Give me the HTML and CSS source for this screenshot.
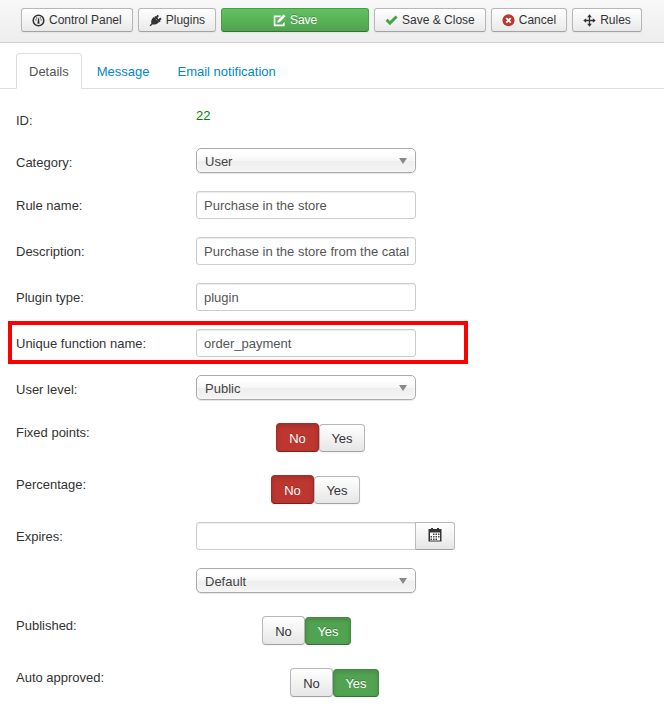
FILE: index.html
```html
<!DOCTYPE html>
<html lang="en">
<head>
<meta charset="utf-8">
<title>Rule details</title>
<link rel="stylesheet" href="styles.css">
</head>
<body>
<header class="toolbar">
  <button type="button" class="btn"><svg class="icon" viewBox="0 0 14 14"><circle cx="7" cy="7" r="5.700" fill="none" stroke="currentColor" stroke-width="1.700"/><path d="M6.300 6 7 3.600 7.700 6 8.200 10.500H5.800z" fill="currentColor"/><circle cx="4.200" cy="6.400" r=".7"/><circle cx="5.100" cy="4.300" r=".7"/><circle cx="8.900" cy="4.300" r=".7"/><circle cx="9.800" cy="6.400" r=".7"/></svg>Control Panel</button>
  <button type="button" class="btn"><svg class="icon" viewBox="0 0 14 14"><path d="M5.200 3.200 10.700 8.900C8.800 11 6 11.900 3.700 11.200L1.700 13.200.6 12.300l1.900-2.200C1.900 7.600 3 4.700 5.200 3.200z"/><path d="M7 5 10 1.500M9.500 7.800 12.900 4.600" stroke="currentColor" stroke-width="2"/><path d="m5.600 3.300 1.500-1.200 5.400 5.600-1.500 1.200z"/></svg>Plugins</button>
  <button type="button" class="btn btn-save"><svg class="icon" viewBox="0 0 14 14"><path d="M9 1.600H.8v11.600h11.700V8.500L10.600 10.200v1.200H2.600V3.400h4.900z"/><path d="m11.500.4 2.100 2.100-6.200 6.200-3 .9.900-3z"/></svg>Save</button>
  <button type="button" class="btn"><svg class="icon icon-ok" viewBox="0 0 14 14"><path d="M.5 7.300 2.800 5l2.500 2.500L11.400 1.600 13.600 3.800 5.300 12z"/></svg>Save &amp; Close</button>
  <button type="button" class="btn"><svg class="icon icon-cancel" viewBox="0 0 14 14"><circle cx="7" cy="6.800" r="6.500"/><path d="m4.600 4.400 4.800 4.800M9.400 4.400 4.600 9.200" stroke="#fff" stroke-width="1.900"/></svg>Cancel</button>
  <button type="button" class="btn"><svg class="icon" viewBox="0 0 14 14"><path d="M7 2v10M2 7h10" stroke="currentColor" stroke-width="1.400"/><path d="m7 .3 2.500 3.100h-5zM7 13.700l2.500-3.100h-5zM.3 7l3.100-2.500v5zM13.700 7l-3.100-2.500v5z"/></svg>Rules</button>
</header>

<nav class="tabs">
  <a href="#details" class="tab tab-active">Details</a>
  <a href="#message" class="tab">Message</a>
  <a href="#email" class="tab">Email notification</a>
</nav>

<form class="form" id="details">
  <div class="row"><span class="label">ID:</span><output class="record-id">22</output></div>
  <div class="row"><label class="label" for="category">Category:</label><div class="select"><select id="category"><option>User</option></select></div></div>
  <div class="row"><label class="label" for="rule">Rule name:</label><input class="text" id="rule" type="text" value="Purchase in the store"></div>
  <div class="row"><label class="label" for="description">Description:</label><input class="text" id="description" type="text" value="Purchase in the store from the catalog"></div>
  <div class="row"><label class="label" for="plugin">Plugin type:</label><input class="text" id="plugin" type="text" value="plugin"></div>
  <div class="row row-marked"><label class="label" for="function">Unique function name:</label><input class="text" id="function" type="text" value="order_payment"></div>
  <div class="row"><label class="label" for="level">User level:</label><div class="select"><select id="level"><option>Public</option></select></div></div>
  <div class="row"><span class="label" id="fixed">Fixed points:</span><div class="toggle toggle-fixed" role="group" aria-labelledby="fixed"><button type="button" class="choice choice-no" aria-pressed="true">No</button><button type="button" class="choice" aria-pressed="false">Yes</button></div></div>
  <div class="row"><span class="label" id="percentage">Percentage:</span><div class="toggle toggle-percentage" role="group" aria-labelledby="percentage"><button type="button" class="choice choice-no" aria-pressed="true">No</button><button type="button" class="choice" aria-pressed="false">Yes</button></div></div>
  <div class="row"><label class="label" for="expires">Expires:</label>
    <div class="stack">
      <div class="date"><input class="text" id="expires" type="text"><button type="button" class="date-button" aria-label="Choose a date"><svg class="calendar" viewBox="0 0 14 14"><path d="M.5 1h13v12.500H.5z" fill="#333"/><path d="M2 4.500h10v8H2z" fill="#fff"/><path d="M3 0h2v2H3zM9 0h2v2H9z" fill="#333"/><path d="M5 5.500h1.500V7H5zM7.500 5.500H9V7H7.500zM10 5.500h1.500V7H10zM2.500 8H4v1.500H2.500zM5 8h1.500v1.500H5zM7.500 8H9v1.500H7.500zM10 8h1.500v1.500H10zM2.500 10.500H4V12H2.500zM5 10.500h1.500V12H5zM7.500 10.500H9V12H7.500z" fill="#444"/></svg></button></div>
      <div class="select"><select aria-label="Expiry method"><option>Default</option></select></div>
    </div>
  </div>
  <div class="row"><span class="label" id="published">Published:</span><div class="toggle toggle-published" role="group" aria-labelledby="published"><button type="button" class="choice" aria-pressed="false">No</button><button type="button" class="choice choice-yes" aria-pressed="true">Yes</button></div></div>
  <div class="row"><span class="label" id="approved">Auto approved:</span><div class="toggle toggle-approved" role="group" aria-labelledby="approved"><button type="button" class="choice" aria-pressed="false">No</button><button type="button" class="choice choice-yes" aria-pressed="true">Yes</button></div></div>
</form>
</body>
</html>
```
FILE: styles.css
```css
*,
*::after {
  box-sizing: border-box;
}

body {
  margin: 0;
  background: #fff;
  color: #333;
  font: 13px/18px "Helvetica Neue", "Liberation Sans", Arial, sans-serif;
}

button,
input,
select {
  margin: 0;
  color: inherit;
  font: inherit;
}

.toolbar {
  display: flex;
  gap: 5px;
  padding: 8px 20px 10px 21px;
  border-bottom: 1px solid #d0d0d0;
  background: linear-gradient(#f8f8f8, #ededed);
}

.btn {
  display: flex;
  align-items: center;
  justify-content: center;
  gap: 4px;
  height: 24px;
  padding: 0 10px;
  border: 1px solid #b7b7b7;
  border-bottom-color: #a2a2a2;
  border-radius: 3px;
  background: linear-gradient(#fff, #e9e9e9);
  box-shadow: 0 1px 2px rgba(0, 0, 0, 0.05);
  font-size: 12px;
  white-space: nowrap;
}

.btn-save {
  width: 148px;
  border-color: #4a9a4a;
  border-bottom-color: #387038;
  background: linear-gradient(#61c261, #50a450);
  color: #fff;
  text-shadow: 0 -1px 0 rgba(0, 0, 0, 0.25);
}

.icon {
  width: 13px;
  height: 13px;
  fill: currentColor;
}

.icon-ok {
  fill: #46a546;
}

.icon-cancel {
  fill: #bd362f;
}

.tabs {
  display: flex;
  gap: 2px;
  margin-top: 10px;
  padding-left: 16px;
  border-bottom: 1px solid #ddd;
}

.tab {
  margin-bottom: -1px;
  padding: 9px 12px 7px;
  border: 1px solid transparent;
  border-radius: 4px 4px 0 0;
  color: #08c;
  text-decoration: none;
}

.tab-active {
  border-color: #ddd;
  border-bottom-color: #fff;
  background: #fff;
  color: #555;
}

.form {
  display: flex;
  flex-direction: column;
  gap: 18px;
  padding: 17px 16px 9px;
}

.row {
  display: flex;
  align-items: flex-start;
}

.row-marked {
  position: relative;
}

.row-marked::after {
  content: "";
  position: absolute;
  top: -8px;
  left: -8px;
  width: 460px;
  height: 43px;
  border: 4px solid #f00;
  pointer-events: none;
}

.label {
  flex: none;
  width: 180px;
  padding-top: 6px;
}

.record-id {
  color: #008000;
  line-height: 20px;
}

.text {
  width: 220px;
  height: 28px;
  padding: 4px 6px 4px 7px;
  border: 1px solid #ccc;
  border-radius: 3px;
  background: #fff;
  box-shadow: inset 0 1px 1px rgba(0, 0, 0, 0.075);
  color: #555;
}

.select {
  position: relative;
  width: 220px;
}

.select::after {
  content: "";
  position: absolute;
  top: 10px;
  right: 9px;
  border: 4px solid transparent;
  border-top: 6px solid #888;
  border-bottom: 0;
  pointer-events: none;
}

.select select {
  display: block;
  width: 100%;
  height: 25px;
  padding: 2px 8px 0;
  border: 1px solid #aaa;
  border-radius: 5px;
  appearance: none;
  background: linear-gradient(#fff 20%, #f6f6f6 50%, #eee 52%, #f4f4f4 100%);
  box-shadow: inset 0 0 3px #fff, 0 1px 1px rgba(0, 0, 0, 0.1);
  color: #444;
}

.toggle {
  display: flex;
  align-items: flex-end;
  padding-top: 5px;
}

.toggle-fixed {
  padding-left: 80px;
}

.toggle-percentage {
  padding-left: 75px;
}

.toggle-published {
  padding-left: 66px;
}

.toggle-approved {
  padding-left: 94px;
}

.choice {
  width: 46px;
  height: 28px;
  padding: 2px 0 0;
  border: 1px solid #b7b7b7;
  border-bottom-color: #a2a2a2;
  border-radius: 4px;
  background: linear-gradient(#fff, #e6e6e6);
  box-shadow: 0 1px 2px rgba(0, 0, 0, 0.05);
}

.choice:first-child {
  width: 43px;
  height: 29px;
}

.choice-no,
.choice-yes {
  box-shadow: inset 0 2px 4px rgba(0, 0, 0, 0.15), 0 1px 2px rgba(0, 0, 0, 0.05);
  color: #fff;
  text-shadow: 0 -1px 0 rgba(0, 0, 0, 0.25);
}

.choice-no {
  border-color: #a52c26;
  border-bottom-color: #7c211d;
  background: #bd362f;
}

.choice-yes {
  border-color: #438a43;
  border-bottom-color: #387038;
  background: #51a351;
}

.stack {
  display: flex;
  flex-direction: column;
  gap: 18px;
}

.date {
  display: flex;
}

.date .text {
  border-radius: 3px 0 0 3px;
}

.date-button {
  display: flex;
  align-items: center;
  justify-content: center;
  width: 40px;
  height: 28px;
  margin-left: -1px;
  padding: 0 0 2px;
  border: 1px solid #bbb;
  border-bottom-color: #a2a2a2;
  border-radius: 0 3px 3px 0;
  background: linear-gradient(#fff, #e6e6e6);
}

.calendar {
  width: 14px;
  height: 14px;
}
```
